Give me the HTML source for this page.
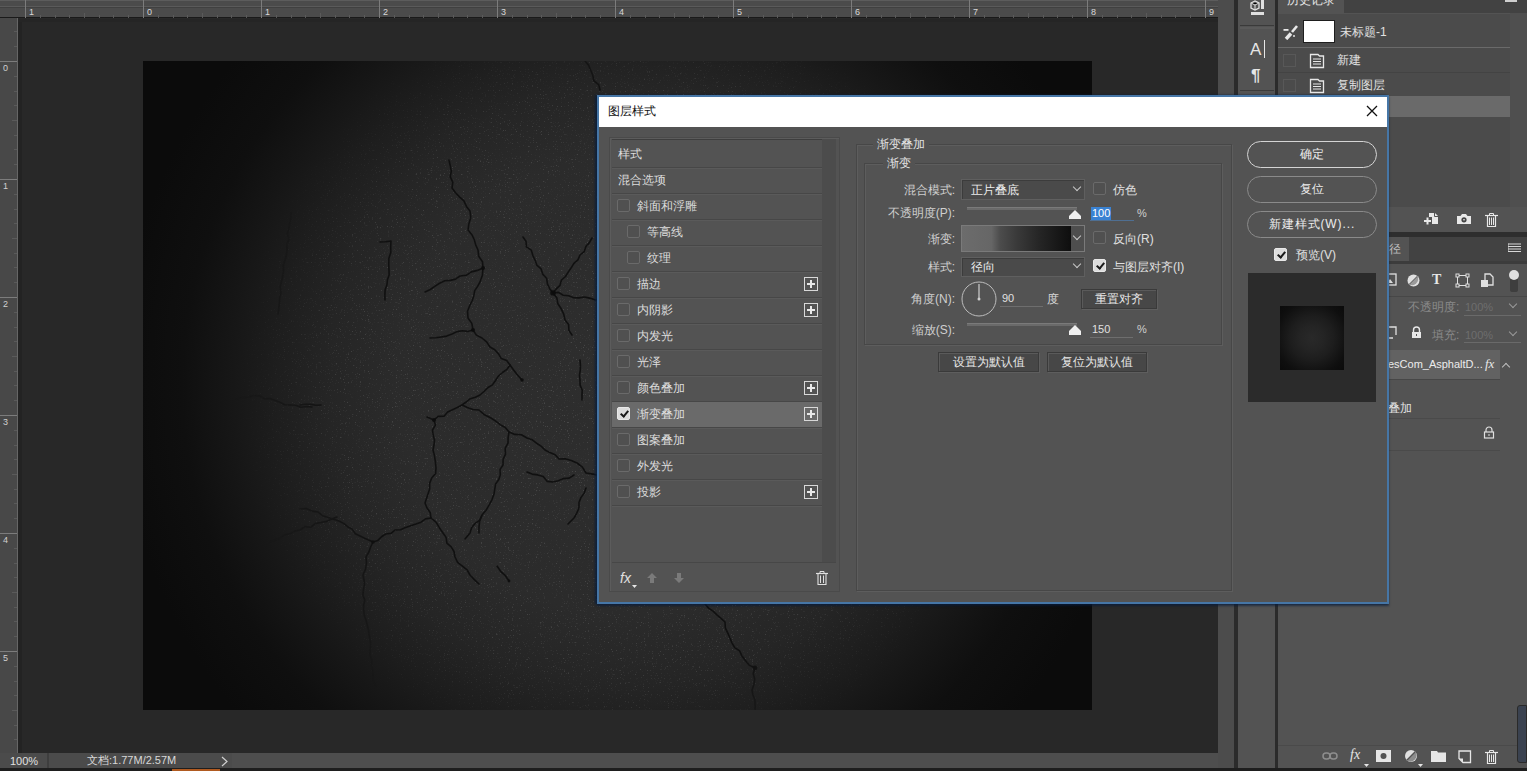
<!DOCTYPE html>
<html><head><meta charset="utf-8">
<style>
*{margin:0;padding:0;box-sizing:border-box}
html,body{width:1527px;height:771px;overflow:hidden;background:#282828;font-family:"Liberation Sans",sans-serif;font-size:12px;color:#d6d6d6}
.a{position:absolute}
.t{position:absolute;white-space:nowrap;line-height:1}

.cb{position:absolute;width:13px;height:13px;border:1px solid #6a6a6a;background:#505050;border-radius:2px}
.cbk{position:absolute;width:13px;height:13px;background:#dcdcdc;border:1px solid #e8e8e8;border-radius:2px}
.cbk:after{content:"";position:absolute;left:3.5px;top:1px;width:3px;height:6px;border:solid #1a1a1a;border-width:0 2px 2px 0;transform:rotate(40deg)}
.pl{position:absolute;width:14px;height:14px;border:1px solid #d8d8d8}
.pl:before{content:"";position:absolute;left:2px;top:5px;width:8px;height:2px;background:#e8e8e8}
.pl:after{content:"";position:absolute;left:5px;top:2px;width:2px;height:8px;background:#e8e8e8}
.row{position:absolute;left:612px;width:210px;height:26px;border-bottom:1px solid #474747;box-shadow:0 1px 0 #5a5a5a}
.rt{position:absolute;white-space:nowrap;line-height:1;font-size:12px;color:#dcdcdc}

.lb{position:absolute;white-space:nowrap;line-height:1;font-size:12px;color:#cfcfcf;text-align:right}
.dd{position:absolute;height:21px;background:#4a4a4a;border:1px solid #5f5f5f;box-shadow:inset 1px 1px 0 #3c3c3c}
.chev{position:absolute;width:6px;height:6px;border:solid #c8c8c8;border-width:0 1px 1px 0;transform:rotate(45deg)}
.btn{position:absolute;height:20px;background:#474747;border:1px solid #3a3a3a;box-shadow:inset 1px 1px 0 #5a5a5a, 1px 1px 0 #5e5e5e;color:#e6e6e6;font-size:12px;line-height:18px;text-align:center}
.pill{position:absolute;left:1247px;width:130px;height:27px;border-radius:14px;border:1px solid #8a8a8a;color:#ececec;font-size:12px;line-height:25px;text-align:center}
.thumb{position:absolute;width:14px;height:9px}
</style></head>
<body>
<!-- canvas area -->
<div class="a" style="left:0;top:0;width:1218px;height:771px;background:#282828"></div>
<!-- top ruler -->
<div class="a" id="rt" style="left:0;top:0;width:1218px;height:18px;background:#4b4b4b;border-bottom:1px solid #1a1a1a"></div>
<!-- left ruler -->
<div class="a" id="rl" style="left:0;top:18px;width:18px;height:735px;background:#484848;border-right:1px solid #666"></div><div class="a" style="left:18px;top:19px;width:4px;height:734px;background:#232323"></div><div class="a" style="left:18px;top:19px;width:1200px;height:3px;background:#252525"></div>
<!-- document -->
<div class="a" id="doc" style="left:143px;top:61px;width:949px;height:649px;background:radial-gradient(circle at 484px 324px,#2e2e2e 0,#2b2b2b 230px,#252525 300px,#1e1e1e 350px,#161616 400px,#0f0f0f 445px,#0b0b0b 510px)"></div>
<svg class="a" style="left:143px;top:61px" width="949" height="649">
<defs><filter id="nz" x="0" y="0" width="100%" height="100%"><feTurbulence type="fractalNoise" baseFrequency="0.75" numOctaves="2" seed="3"/><feColorMatrix values="0 0 0 0 1  0 0 0 0 1  0 0 0 0 1  6 0 0 0 -3.9"/></filter>
<radialGradient id="vg" cx="484" cy="324" r="480" gradientUnits="userSpaceOnUse"><stop offset="0" stop-color="#fff" stop-opacity="1"/><stop offset="0.6" stop-color="#fff" stop-opacity="0.9"/><stop offset="0.82" stop-color="#fff" stop-opacity="0"/></radialGradient>
<mask id="vm"><rect width="949" height="649" fill="url(#vg)"/></mask></defs>
<g mask="url(#vm)"><rect width="949" height="649" filter="url(#nz)" opacity="0.13"/>
<g fill="none" stroke="#0a0a0a" stroke-width="1.6" stroke-linejoin="round" stroke-linecap="round" opacity="0.85"><polyline points="306.0,99.0 307.2,104.5 308.3,110.1 307.3,115.9 309.8,121.3 309.0,127.0 312.5,131.7 316.5,135.9 320.9,139.9 323.4,145.4 327.0,150.0 327.8,156.5 325.9,162.7 325.0,169.0 328.7,173.4 331.2,178.4 332.7,183.9 335.0,189.0 335.7,195.3 339.5,200.7 340.0,207.0 339.4,214.2 337.0,221.0 334.6,225.4 331.7,229.6 330.8,234.7 329.3,239.5 327.0,244.0 324.5,250.3 325.0,257.0 328.8,262.4 330.0,269.0 333.4,274.1 339.0,277.0 343.6,280.9 347.0,286.0 351.8,288.7 355.4,292.7 358.3,297.6 363.7,299.6 367.0,304.0 370.8,309.2 374.7,314.3 379.0,319.0"/><polyline points="340.0,207.0 334.4,209.4 328.4,210.9 323.2,214.3 317.0,215.0 312.5,218.1 307.3,219.4 301.8,219.7 297.0,222.0 292.1,225.2 287.3,228.5 282.0,231.0"/><polyline points="237.0,181.0 242.5,180.8 248.0,180.0 247.7,185.8 247.8,191.6 245.9,197.3 245.8,203.2 246.0,209.0 246.1,214.1 244.4,219.0 243.9,224.0 242.1,228.8 241.9,233.9 242.0,239.0"/><polyline points="380.0,176.0 383.0,180.3 383.4,185.9 388.3,189.2 389.8,194.3 392.0,199.0 393.8,204.1 398.1,207.9 399.7,213.1 403.6,217.2 404.4,222.8 406.7,227.7 410.0,232.0 413.2,227.9 417.0,224.3 418.5,219.0 422.5,215.5 425.2,211.1 428.2,206.8 430.9,202.4 434.9,198.9 437.0,194.0 441.2,190.6 442.9,185.5 446.4,181.6 449.0,177.0"/><polyline points="410.0,232.0 415.4,231.4 420.3,234.2 425.6,234.8 430.7,236.7 436.0,236.9 441.4,236.0 446.6,237.1 451.7,238.8 457.0,239.0"/><polyline points="410.0,232.0 413.8,236.8 414.9,242.8 418.2,247.8 420.7,253.1 422.0,259.0 425.6,263.4 425.9,269.4 429.0,274.0"/><polyline points="442.0,0.0 445.6,4.3 447.7,9.3 449.8,14.3 450.9,19.9 455.7,23.6 457.0,29.0"/><polyline points="437.0,299.0 437.4,304.0 437.3,309.0 436.5,314.1 437.0,319.1 437.1,324.1 439.2,329.0 439.0,334.0 439.0,339.0"/><polyline points="330.0,269.0 324.8,270.4 319.3,269.8 314.0,270.6 309.0,273.0 303.7,275.1 298.2,276.0 292.7,276.8 287.0,277.0"/><polyline points="367.0,304.0 363.9,308.4 359.5,311.5 355.5,315.0 352.5,319.5 349.4,323.9 344.7,326.7 341.0,330.5 337.0,334.0 332.4,336.3 327.3,337.7 323.2,341.0 319.0,344.0 314.3,346.5 309.5,348.7 304.7,351.0 301.0,355.3 295.1,355.4 291.0,359.0 284.0,356.0"/><polyline points="319.0,344.0 324.4,346.5 330.0,348.5 336.0,349.0 341.5,353.8 348.0,357.0 352.7,360.2 357.2,363.7 362.3,366.5 366.0,371.0 371.9,373.4 378.4,373.7 384.0,377.0 389.3,378.8 393.5,382.2 398.1,385.1 402.0,389.0 406.9,391.6 412.1,393.8 416.0,398.0 422.3,397.8 428.2,399.6 434.0,402.0 439.4,406.1 443.0,412.0 450.1,413.1 457.0,415.0"/><polyline points="291.0,359.0 292.4,364.1 289.5,369.0 290.1,374.0 291.5,379.0 291.0,384.0 290.0,389.0 291.5,394.9 292.4,400.9 293.0,407.0 292.6,412.6 288.7,417.1 286.7,422.1 286.7,427.8 285.0,433.0 282.0,442.0 284.0,447.0 287.2,451.5 288.0,457.0 293.0,461.2 296.4,466.7 300.0,472.0 303.1,476.5 303.9,482.1 308.2,485.9 311.0,490.5 312.0,496.0 314.6,501.4 319.4,505.1 324.1,508.8 327.0,514.0 331.4,518.6 336.0,523.0"/><polyline points="157.0,448.0 163.2,447.5 169.0,450.1 175.0,451.0 179.6,454.7 185.0,456.6 190.5,458.3 196.0,460.0 200.6,462.4 204.6,465.7 209.2,468.1 212.3,472.7 217.0,475.0 223.5,478.1 230.0,481.0 234.8,479.4 238.5,475.7 242.8,473.0 248.1,472.3 252.0,469.0 257.6,468.8 262.6,466.6 267.7,464.8 272.9,463.1 278.0,461.2 282.6,457.9 288.0,457.0"/><polyline points="230.0,481.0 227.6,486.0 225.8,491.2 223.0,496.0 223.5,502.2 222.5,508.2 220.0,514.0 221.0,519.0 221.4,523.9 220.4,529.0 219.9,534.1 221.8,539.0 220.6,544.1 220.8,549.1 221.2,554.1 223.0,559.0 224.2,563.9 225.4,568.9 226.1,573.9 227.0,578.9 227.7,583.9 227.1,589.1 227.0,594.2 229.0,599.0 228.4,604.3 230.1,609.4 230.0,614.6 230.0,619.9 232.8,624.9 231.5,630.2 231.2,635.5 232.1,640.7 232.7,645.9 234.0,651.0"/><polyline points="366.0,371.0 365.1,376.5 365.0,382.2 362.1,387.3 362.5,393.1 360.1,398.3 360.0,404.0 357.1,408.4 357.3,413.8 355.8,418.6 352.6,422.9 351.8,428.0 351.0,433.0 348.9,438.8 346.0,444.1 343.0,449.3 339.0,454.0 336.7,459.8 336.0,465.8 336.0,472.0"/><polyline points="339.0,454.0 336.9,459.1 332.1,462.4 328.7,466.6 327.0,472.0 322.0,478.0"/><polyline points="354.0,505.0 357.6,510.3 362.4,514.7 366.0,520.0"/><polyline points="384.0,411.0 389.1,413.1 394.8,413.9 400.2,415.5 404.3,420.4 410.0,421.0 415.4,419.7 420.5,417.6 426.2,417.1 431.0,414.0"/><polyline points="443.0,427.0 441.2,432.1 437.9,436.6 436.0,441.6 435.9,447.3 433.7,452.3 431.0,457.0 425.0,463.0"/><polyline points="157.0,344.0 162.2,343.3 167.5,343.2 172.8,344.3 178.0,344.0"/><polyline points="93.0,338.0 98.9,336.5 105.0,336.2 110.9,334.6 117.0,335.0 121.6,337.8 127.1,337.6 132.0,339.4 136.9,341.3 141.6,343.7 147.0,344.0 152.5,344.2 157.9,346.3 163.5,345.5 169.0,346.0"/><polyline points="127.0,481.0 132.0,479.1 137.0,477.1 141.4,473.6 146.9,472.8 151.6,470.1 157.0,469.0 161.8,465.6 167.9,466.2 172.5,462.4 178.1,461.5 183.7,460.4 188.8,458.0 194.0,456.0"/><polyline points="148.0,152.0 147.9,157.3 146.6,162.4 145.8,167.6 144.4,172.8 145.9,178.3 143.8,183.3 144.1,188.7 143.4,193.9 142.0,199.0 140.4,204.3 140.6,209.8 139.7,215.2 138.4,220.5 137.2,225.8 138.0,231.4 136.7,236.8 136.4,242.2 135.7,247.6 135.0,253.0"/><polyline points="562.0,543.0 565.6,547.1 570.1,550.1 573.9,553.9 578.0,557.3 582.0,561.0 582.3,566.8 584.7,571.9 587.0,577.0 589.0,582.1 591.8,586.6 596.6,589.8 598.8,594.7 602.0,599.0 606.1,604.1 612.0,607.0 610.2,612.4 611.7,618.2 610.9,623.7 609.0,629.0 609.9,634.0 611.9,638.8 612.1,643.9 612.0,649.0"/><polyline points="187.0,0.0 187.6,5.7 185.0,11.1 184.0,16.6 182.9,22.1 184.5,28.0 182.0,33.3 182.0,39.0 180.6,43.9 181.4,49.2 178.2,53.8 177.0,58.7 178.5,64.2 175.3,68.8 176.2,74.1 175.0,79.0"/></g>
<g fill="#0b0b0b" opacity="0.9"><circle cx="340" cy="207" r="2.1"/><circle cx="410" cy="232" r="2.8"/><circle cx="330" cy="269" r="2.1"/><circle cx="291" cy="359" r="2.1"/><circle cx="230" cy="481" r="1.8"/><circle cx="612" cy="607" r="2.4"/><circle cx="379" cy="319" r="1.8"/><circle cx="366" cy="520" r="1.4"/></g></g>
</svg>
<!-- status bar -->
<div class="a" style="left:0;top:753px;width:1218px;height:15px;background:#4b4b4b"></div>
<div class="a" style="left:0;top:768px;width:1527px;height:3px;background:#1e1e1e"></div>
<!-- right strip -->
<div class="a" style="left:0;top:0;width:1218px;height:1px;background:#5c5c5c"></div>
<div class="a" style="left:0;top:6px;width:1218px;height:1px;background:#5a5a5a"></div>
<div class="a" style="left:0;top:7px;width:1218px;height:1px;background:#404040"></div>
<div class="a" style="left:25px;top:0;width:1px;height:18px;background:#7c7c7c"></div>
<div class="t" style="left:29px;top:8px;font-size:9px;color:#d8d8d8">1</div>
<div class="a" style="left:40px;top:15px;width:1px;height:3px;background:#5a5a5a"></div>
<div class="a" style="left:55px;top:15px;width:1px;height:3px;background:#5a5a5a"></div>
<div class="a" style="left:69px;top:15px;width:1px;height:3px;background:#5a5a5a"></div>
<div class="a" style="left:84px;top:13px;width:1px;height:5px;background:#5a5a5a"></div>
<div class="a" style="left:99px;top:15px;width:1px;height:3px;background:#5a5a5a"></div>
<div class="a" style="left:113px;top:15px;width:1px;height:3px;background:#5a5a5a"></div>
<div class="a" style="left:128px;top:15px;width:1px;height:3px;background:#5a5a5a"></div>
<div class="a" style="left:143px;top:0;width:1px;height:18px;background:#7c7c7c"></div>
<div class="t" style="left:147px;top:8px;font-size:9px;color:#d8d8d8">0</div>
<div class="a" style="left:158px;top:15px;width:1px;height:3px;background:#5a5a5a"></div>
<div class="a" style="left:173px;top:15px;width:1px;height:3px;background:#5a5a5a"></div>
<div class="a" style="left:187px;top:15px;width:1px;height:3px;background:#5a5a5a"></div>
<div class="a" style="left:202px;top:13px;width:1px;height:5px;background:#5a5a5a"></div>
<div class="a" style="left:217px;top:15px;width:1px;height:3px;background:#5a5a5a"></div>
<div class="a" style="left:231px;top:15px;width:1px;height:3px;background:#5a5a5a"></div>
<div class="a" style="left:246px;top:15px;width:1px;height:3px;background:#5a5a5a"></div>
<div class="a" style="left:261px;top:0;width:1px;height:18px;background:#7c7c7c"></div>
<div class="t" style="left:265px;top:8px;font-size:9px;color:#d8d8d8">1</div>
<div class="a" style="left:276px;top:15px;width:1px;height:3px;background:#5a5a5a"></div>
<div class="a" style="left:291px;top:15px;width:1px;height:3px;background:#5a5a5a"></div>
<div class="a" style="left:305px;top:15px;width:1px;height:3px;background:#5a5a5a"></div>
<div class="a" style="left:320px;top:13px;width:1px;height:5px;background:#5a5a5a"></div>
<div class="a" style="left:335px;top:15px;width:1px;height:3px;background:#5a5a5a"></div>
<div class="a" style="left:349px;top:15px;width:1px;height:3px;background:#5a5a5a"></div>
<div class="a" style="left:364px;top:15px;width:1px;height:3px;background:#5a5a5a"></div>
<div class="a" style="left:379px;top:0;width:1px;height:18px;background:#7c7c7c"></div>
<div class="t" style="left:383px;top:8px;font-size:9px;color:#d8d8d8">2</div>
<div class="a" style="left:394px;top:15px;width:1px;height:3px;background:#5a5a5a"></div>
<div class="a" style="left:409px;top:15px;width:1px;height:3px;background:#5a5a5a"></div>
<div class="a" style="left:423px;top:15px;width:1px;height:3px;background:#5a5a5a"></div>
<div class="a" style="left:438px;top:13px;width:1px;height:5px;background:#5a5a5a"></div>
<div class="a" style="left:453px;top:15px;width:1px;height:3px;background:#5a5a5a"></div>
<div class="a" style="left:467px;top:15px;width:1px;height:3px;background:#5a5a5a"></div>
<div class="a" style="left:482px;top:15px;width:1px;height:3px;background:#5a5a5a"></div>
<div class="a" style="left:497px;top:0;width:1px;height:18px;background:#7c7c7c"></div>
<div class="t" style="left:501px;top:8px;font-size:9px;color:#d8d8d8">3</div>
<div class="a" style="left:512px;top:15px;width:1px;height:3px;background:#5a5a5a"></div>
<div class="a" style="left:527px;top:15px;width:1px;height:3px;background:#5a5a5a"></div>
<div class="a" style="left:541px;top:15px;width:1px;height:3px;background:#5a5a5a"></div>
<div class="a" style="left:556px;top:13px;width:1px;height:5px;background:#5a5a5a"></div>
<div class="a" style="left:571px;top:15px;width:1px;height:3px;background:#5a5a5a"></div>
<div class="a" style="left:585px;top:15px;width:1px;height:3px;background:#5a5a5a"></div>
<div class="a" style="left:600px;top:15px;width:1px;height:3px;background:#5a5a5a"></div>
<div class="a" style="left:615px;top:0;width:1px;height:18px;background:#7c7c7c"></div>
<div class="t" style="left:619px;top:8px;font-size:9px;color:#d8d8d8">4</div>
<div class="a" style="left:630px;top:15px;width:1px;height:3px;background:#5a5a5a"></div>
<div class="a" style="left:645px;top:15px;width:1px;height:3px;background:#5a5a5a"></div>
<div class="a" style="left:659px;top:15px;width:1px;height:3px;background:#5a5a5a"></div>
<div class="a" style="left:674px;top:13px;width:1px;height:5px;background:#5a5a5a"></div>
<div class="a" style="left:689px;top:15px;width:1px;height:3px;background:#5a5a5a"></div>
<div class="a" style="left:703px;top:15px;width:1px;height:3px;background:#5a5a5a"></div>
<div class="a" style="left:718px;top:15px;width:1px;height:3px;background:#5a5a5a"></div>
<div class="a" style="left:733px;top:0;width:1px;height:18px;background:#7c7c7c"></div>
<div class="t" style="left:737px;top:8px;font-size:9px;color:#d8d8d8">5</div>
<div class="a" style="left:748px;top:15px;width:1px;height:3px;background:#5a5a5a"></div>
<div class="a" style="left:763px;top:15px;width:1px;height:3px;background:#5a5a5a"></div>
<div class="a" style="left:777px;top:15px;width:1px;height:3px;background:#5a5a5a"></div>
<div class="a" style="left:792px;top:13px;width:1px;height:5px;background:#5a5a5a"></div>
<div class="a" style="left:807px;top:15px;width:1px;height:3px;background:#5a5a5a"></div>
<div class="a" style="left:821px;top:15px;width:1px;height:3px;background:#5a5a5a"></div>
<div class="a" style="left:836px;top:15px;width:1px;height:3px;background:#5a5a5a"></div>
<div class="a" style="left:851px;top:0;width:1px;height:18px;background:#7c7c7c"></div>
<div class="t" style="left:855px;top:8px;font-size:9px;color:#d8d8d8">6</div>
<div class="a" style="left:866px;top:15px;width:1px;height:3px;background:#5a5a5a"></div>
<div class="a" style="left:881px;top:15px;width:1px;height:3px;background:#5a5a5a"></div>
<div class="a" style="left:895px;top:15px;width:1px;height:3px;background:#5a5a5a"></div>
<div class="a" style="left:910px;top:13px;width:1px;height:5px;background:#5a5a5a"></div>
<div class="a" style="left:925px;top:15px;width:1px;height:3px;background:#5a5a5a"></div>
<div class="a" style="left:939px;top:15px;width:1px;height:3px;background:#5a5a5a"></div>
<div class="a" style="left:954px;top:15px;width:1px;height:3px;background:#5a5a5a"></div>
<div class="a" style="left:969px;top:0;width:1px;height:18px;background:#7c7c7c"></div>
<div class="t" style="left:973px;top:8px;font-size:9px;color:#d8d8d8">7</div>
<div class="a" style="left:984px;top:15px;width:1px;height:3px;background:#5a5a5a"></div>
<div class="a" style="left:999px;top:15px;width:1px;height:3px;background:#5a5a5a"></div>
<div class="a" style="left:1013px;top:15px;width:1px;height:3px;background:#5a5a5a"></div>
<div class="a" style="left:1028px;top:13px;width:1px;height:5px;background:#5a5a5a"></div>
<div class="a" style="left:1043px;top:15px;width:1px;height:3px;background:#5a5a5a"></div>
<div class="a" style="left:1057px;top:15px;width:1px;height:3px;background:#5a5a5a"></div>
<div class="a" style="left:1072px;top:15px;width:1px;height:3px;background:#5a5a5a"></div>
<div class="a" style="left:1087px;top:0;width:1px;height:18px;background:#7c7c7c"></div>
<div class="t" style="left:1091px;top:8px;font-size:9px;color:#d8d8d8">8</div>
<div class="a" style="left:1102px;top:15px;width:1px;height:3px;background:#5a5a5a"></div>
<div class="a" style="left:1117px;top:15px;width:1px;height:3px;background:#5a5a5a"></div>
<div class="a" style="left:1131px;top:15px;width:1px;height:3px;background:#5a5a5a"></div>
<div class="a" style="left:1146px;top:13px;width:1px;height:5px;background:#5a5a5a"></div>
<div class="a" style="left:1161px;top:15px;width:1px;height:3px;background:#5a5a5a"></div>
<div class="a" style="left:1175px;top:15px;width:1px;height:3px;background:#5a5a5a"></div>
<div class="a" style="left:1190px;top:15px;width:1px;height:3px;background:#5a5a5a"></div>
<div class="a" style="left:1205px;top:0;width:1px;height:18px;background:#7c7c7c"></div>
<div class="t" style="left:1209px;top:8px;font-size:9px;color:#d8d8d8">9</div>
<div class="a" style="left:0;top:61px;width:17px;height:1px;background:#7c7c7c"></div>
<div class="t" style="left:3px;top:64px;font-size:9px;color:#d0d0d0">0</div>
<div class="a" style="left:14px;top:76px;width:3px;height:1px;background:#5a5a5a"></div>
<div class="a" style="left:14px;top:91px;width:3px;height:1px;background:#5a5a5a"></div>
<div class="a" style="left:14px;top:105px;width:3px;height:1px;background:#5a5a5a"></div>
<div class="a" style="left:12px;top:120px;width:5px;height:1px;background:#5a5a5a"></div>
<div class="a" style="left:14px;top:135px;width:3px;height:1px;background:#5a5a5a"></div>
<div class="a" style="left:14px;top:149px;width:3px;height:1px;background:#5a5a5a"></div>
<div class="a" style="left:14px;top:164px;width:3px;height:1px;background:#5a5a5a"></div>
<div class="a" style="left:0;top:179px;width:17px;height:1px;background:#7c7c7c"></div>
<div class="t" style="left:3px;top:182px;font-size:9px;color:#d0d0d0">1</div>
<div class="a" style="left:14px;top:194px;width:3px;height:1px;background:#5a5a5a"></div>
<div class="a" style="left:14px;top:209px;width:3px;height:1px;background:#5a5a5a"></div>
<div class="a" style="left:14px;top:223px;width:3px;height:1px;background:#5a5a5a"></div>
<div class="a" style="left:12px;top:238px;width:5px;height:1px;background:#5a5a5a"></div>
<div class="a" style="left:14px;top:253px;width:3px;height:1px;background:#5a5a5a"></div>
<div class="a" style="left:14px;top:267px;width:3px;height:1px;background:#5a5a5a"></div>
<div class="a" style="left:14px;top:282px;width:3px;height:1px;background:#5a5a5a"></div>
<div class="a" style="left:0;top:297px;width:17px;height:1px;background:#7c7c7c"></div>
<div class="t" style="left:3px;top:300px;font-size:9px;color:#d0d0d0">2</div>
<div class="a" style="left:14px;top:312px;width:3px;height:1px;background:#5a5a5a"></div>
<div class="a" style="left:14px;top:327px;width:3px;height:1px;background:#5a5a5a"></div>
<div class="a" style="left:14px;top:341px;width:3px;height:1px;background:#5a5a5a"></div>
<div class="a" style="left:12px;top:356px;width:5px;height:1px;background:#5a5a5a"></div>
<div class="a" style="left:14px;top:371px;width:3px;height:1px;background:#5a5a5a"></div>
<div class="a" style="left:14px;top:385px;width:3px;height:1px;background:#5a5a5a"></div>
<div class="a" style="left:14px;top:400px;width:3px;height:1px;background:#5a5a5a"></div>
<div class="a" style="left:0;top:415px;width:17px;height:1px;background:#7c7c7c"></div>
<div class="t" style="left:3px;top:418px;font-size:9px;color:#d0d0d0">3</div>
<div class="a" style="left:14px;top:430px;width:3px;height:1px;background:#5a5a5a"></div>
<div class="a" style="left:14px;top:445px;width:3px;height:1px;background:#5a5a5a"></div>
<div class="a" style="left:14px;top:459px;width:3px;height:1px;background:#5a5a5a"></div>
<div class="a" style="left:12px;top:474px;width:5px;height:1px;background:#5a5a5a"></div>
<div class="a" style="left:14px;top:489px;width:3px;height:1px;background:#5a5a5a"></div>
<div class="a" style="left:14px;top:503px;width:3px;height:1px;background:#5a5a5a"></div>
<div class="a" style="left:14px;top:518px;width:3px;height:1px;background:#5a5a5a"></div>
<div class="a" style="left:0;top:533px;width:17px;height:1px;background:#7c7c7c"></div>
<div class="t" style="left:3px;top:536px;font-size:9px;color:#d0d0d0">4</div>
<div class="a" style="left:14px;top:548px;width:3px;height:1px;background:#5a5a5a"></div>
<div class="a" style="left:14px;top:563px;width:3px;height:1px;background:#5a5a5a"></div>
<div class="a" style="left:14px;top:577px;width:3px;height:1px;background:#5a5a5a"></div>
<div class="a" style="left:12px;top:592px;width:5px;height:1px;background:#5a5a5a"></div>
<div class="a" style="left:14px;top:607px;width:3px;height:1px;background:#5a5a5a"></div>
<div class="a" style="left:14px;top:621px;width:3px;height:1px;background:#5a5a5a"></div>
<div class="a" style="left:14px;top:636px;width:3px;height:1px;background:#5a5a5a"></div>
<div class="a" style="left:0;top:651px;width:17px;height:1px;background:#7c7c7c"></div>
<div class="t" style="left:3px;top:654px;font-size:9px;color:#d0d0d0">5</div>
<div class="a" style="left:14px;top:666px;width:3px;height:1px;background:#5a5a5a"></div>
<div class="a" style="left:14px;top:681px;width:3px;height:1px;background:#5a5a5a"></div>
<div class="a" style="left:14px;top:695px;width:3px;height:1px;background:#5a5a5a"></div>
<div class="a" style="left:12px;top:710px;width:5px;height:1px;background:#5a5a5a"></div>
<div class="a" style="left:14px;top:725px;width:3px;height:1px;background:#5a5a5a"></div>
<div class="a" style="left:14px;top:739px;width:3px;height:1px;background:#5a5a5a"></div>
<div class="a" style="left:14px;top:46px;width:3px;height:1px;background:#5a5a5a"></div>
<div class="a" style="left:14px;top:31px;width:3px;height:1px;background:#5a5a5a"></div>
<div class="a" style="left:47px;top:753px;width:2px;height:15px;background:#3e3e3e"></div>
<div class="a" style="left:232px;top:753px;width:986px;height:15px;background:#4e4e4e"></div>
<div class="t" style="left:10px;top:756px;font-size:11px;color:#e0e0e0">100%</div>
<div class="t" style="left:87px;top:755px;font-size:11px;color:#d8d8d8">文档:1.77M/2.57M</div>
<svg class="a" style="left:221px;top:756px" width="8" height="11"><path d="M1 1L6 5.5L1 10" fill="none" stroke="#d0d0d0" stroke-width="1.2"/></svg>
<div class="a" style="left:172px;top:769px;width:48px;height:2px;background:#b05a20"></div>
<div class="a" style="left:1218px;top:0;width:16px;height:768px;background:#4c4c4c"></div>
<div class="a" style="left:1234px;top:0;width:4px;height:768px;background:#2b2b2b"></div>
<div class="a" style="left:1238px;top:0;width:37px;height:768px;background:#535353"></div>
<div class="a" style="left:1275px;top:0;width:3px;height:768px;background:#2b2b2b"></div>
<div class="a" style="left:1278px;top:0;width:249px;height:768px;background:#535353"></div>
<div class="a" style="left:1240px;top:25px;width:34px;height:1px;background:#3a3a3a"></div>
<div class="a" style="left:1240px;top:27px;width:34px;height:2px;background:#5a5a5a"></div>
<div class="a" style="left:1240px;top:90px;width:34px;height:1px;background:#3a3a3a"></div>
<svg class="a" style="left:1249px;top:0px" width="18" height="17"><path d="M2 3L6 1L10 3V8L6 10L2 8Z" fill="none" stroke="#e0e0e0" stroke-width="1.3"/><path d="M2 3L6 5L10 3M6 5V10" stroke="#e0e0e0" stroke-width="1"/><rect x="12" y="0" width="3" height="9" fill="#e0e0e0"/><rect x="2" y="12" width="13" height="3" fill="#e0e0e0"/></svg>
<div class="t" style="left:1250px;top:41px;font-size:17px;color:#e6e6e6">A</div>
<div class="a" style="left:1264px;top:40px;width:1px;height:18px;background:#e6e6e6"></div>
<div class="t" style="left:1251px;top:67px;font-size:17px;font-weight:bold;color:#e6e6e6">¶</div>
<div class="a" style="left:1278px;top:0;width:249px;height:13px;background:#424242"></div>
<div class="a" style="left:1278px;top:0;width:66px;height:13px;background:#535353"></div>
<div class="t" style="left:1287px;top:-6px;font-size:12px;color:#e6e6e6">历史记录</div>
<div class="a" style="left:1505px;top:0px;width:12px;height:2px;background:#cfcfcf"></div>
<div class="a" style="left:1278px;top:14px;width:232px;height:193px;background:#4b4b4b"></div>
<div class="a" style="left:1510px;top:13px;width:17px;height:194px;background:#4f4f4f"></div>
<div class="a" style="left:1278px;top:47px;width:232px;height:1px;background:#6a6a6a"></div>
<svg class="a" style="left:1282px;top:24px" width="16" height="16"><path d="M15 2L10 8" stroke="#e8e8e8" stroke-width="2.6"/><path d="M9 9.5L4 15" stroke="#e8e8e8" stroke-width="3.4"/><rect x="1.5" y="5" width="5" height="1.8" fill="#e8e8e8"/><rect x="11" y="11" width="2" height="2" fill="#bdbdbd"/></svg>
<div class="a" style="left:1303px;top:20px;width:32px;height:23px;background:#ffffff;border:1px solid #1e1e1e"></div>
<div class="t" style="left:1340px;top:26px;font-size:12px;color:#e0e0e0">未标题-1</div>
<div class="a" style="left:1278px;top:72px;width:232px;height:1px;background:#434343"></div>
<div class="a" style="left:1283px;top:54px;width:13px;height:13px;border:1px solid #585858"></div>
<svg class="a" style="left:1309px;top:53px" width="16" height="16"><path d="M1.5 1.5H9L10.5 3H14.5V14.5H1.5Z" fill="none" stroke="#e8e8e8" stroke-width="1.3"/><path d="M4 6H12M4 8.5H12M4 11H12" stroke="#e8e8e8" stroke-width="1.2"/></svg>
<div class="t" style="left:1337px;top:54px;font-size:12px;color:#e0e0e0">新建</div>
<div class="a" style="left:1278px;top:97px;width:232px;height:1px;background:#434343"></div>
<div class="a" style="left:1283px;top:79px;width:13px;height:13px;border:1px solid #585858"></div>
<svg class="a" style="left:1309px;top:78px" width="16" height="16"><path d="M1.5 1.5H9L10.5 3H14.5V14.5H1.5Z" fill="none" stroke="#e8e8e8" stroke-width="1.3"/><path d="M4 6H12M4 8.5H12M4 11H12" stroke="#e8e8e8" stroke-width="1.2"/></svg>
<div class="t" style="left:1337px;top:79px;font-size:12px;color:#e0e0e0">复制图层</div>
<div class="a" style="left:1278px;top:96px;width:232px;height:21px;background:#6a6a6a"></div>
<div class="a" style="left:1278px;top:207px;width:249px;height:25px;background:#535353"></div>
<svg class="a" style="left:1423px;top:213px" width="16" height="12"><path d="M6 0H12L15 3V11H6Z" fill="#e8e8e8"/><path d="M11.5 0V3.5H15" fill="none" stroke="#535353" stroke-width="1"/><rect x="0" y="4" width="9" height="8" fill="#535353"/><path d="M1 8H8M4.5 4.5V11.5" stroke="#e8e8e8" stroke-width="2"/></svg>
<svg class="a" style="left:1457px;top:213px" width="14" height="11"><path d="M0 3H3.5L5 1H9L10.5 3H14V11H0Z" fill="#e8e8e8"/><circle cx="7" cy="6.8" r="2.6" fill="#444"/><rect x="6" y="6.3" width="2" height="1" fill="#e8e8e8"/></svg>
<svg class="a" style="left:1485px;top:213px" width="13" height="14"><path d="M0 2.5H13" stroke="#e8e8e8" stroke-width="1.2"/><path d="M4.5 2.5V0.5H8.5V2.5" stroke="#e8e8e8" stroke-width="1" fill="none"/><path d="M2.5 3V13.5H10.5V3" stroke="#e8e8e8" stroke-width="1.2" fill="none"/><path d="M4.5 4.5V12M6.5 4.5V12M8.5 4.5V12" stroke="#e8e8e8" stroke-width="1"/></svg>
<div class="a" style="left:1278px;top:232px;width:249px;height:5px;background:#2e2e2e"></div>
<div class="a" style="left:1278px;top:237px;width:249px;height:24px;background:#424242"></div>
<div class="a" style="left:1278px;top:237px;width:131px;height:24px;background:#535353"></div>
<div class="t" style="left:1377px;top:243px;font-size:12px;color:#bdbdbd">路径</div>
<svg class="a" style="left:1508px;top:243px" width="13" height="11"><path d="M0 1H13M0 3.5H13M0 6H13M0 8.5H13" stroke="#d8d8d8" stroke-width="1"/><path d="M0 0.5V9" stroke="#d8d8d8" stroke-width="1"/></svg>
<div class="a" style="left:1278px;top:261px;width:249px;height:3px;background:#3c3c3c"></div>
<svg class="a" style="left:1384px;top:273px" width="14" height="14"><rect x="1" y="1" width="11" height="11" fill="none" stroke="#e0e0e0" stroke-width="1.3"/><path d="M3 10L6 6L9 10Z" fill="#e0e0e0"/></svg>
<svg class="a" style="left:1406px;top:273px" width="15" height="15"><circle cx="7.5" cy="7.5" r="6" fill="#e0e0e0"/><path d="M3.5 11.5L11.5 3.5" stroke="#535353" stroke-width="1.5"/><path d="M11.5 3.5A6 6 0 0 1 3.5 11.5Z" fill="#9a9a9a"/></svg>
<div class="t" style="left:1432px;top:273px;font-size:14px;font-weight:bold;font-family:'Liberation Serif',serif;color:#e6e6e6">T</div>
<svg class="a" style="left:1455px;top:273px" width="15" height="15"><rect x="2.5" y="2.5" width="10" height="10" fill="none" stroke="#e0e0e0" stroke-width="1"/><rect x="1" y="1" width="3" height="3" fill="#535353" stroke="#e0e0e0"/><rect x="11" y="1" width="3" height="3" fill="#535353" stroke="#e0e0e0"/><rect x="1" y="11" width="3" height="3" fill="#535353" stroke="#e0e0e0"/><rect x="11" y="11" width="3" height="3" fill="#535353" stroke="#e0e0e0"/></svg>
<svg class="a" style="left:1480px;top:273px" width="14" height="15"><path d="M5 1H10L13 4V12H5Z" fill="none" stroke="#e0e0e0" stroke-width="1.3"/><rect x="1" y="7" width="7" height="7" fill="#e0e0e0"/></svg>
<div class="a" style="left:1510px;top:278px;width:8px;height:14px;background:#3e3e3e;border-radius:2px"></div>
<div class="a" style="left:1509px;top:270px;width:10px;height:10px;background:#e0e0e0;border-radius:5px"></div>
<div class="a" style="left:1278px;top:296px;width:249px;height:1px;background:#474747"></div>
<div class="t" style="left:1408px;top:301px;font-size:12px;color:#8a8a8a">不透明度:</div>
<div class="t" style="left:1465px;top:302px;font-size:11px;color:#6e6e6e">100%</div>
<div class="a" style="left:1464px;top:315px;width:57px;height:1px;background:#6a6a6a"></div>
<div class="chev" style="left:1510px;top:301px;border-color:#9a9a9a"></div>
<svg class="a" style="left:1384px;top:326px" width="14" height="14"><path d="M1 4V12H9M4 1H12V9" fill="none" stroke="#e0e0e0" stroke-width="1.3"/></svg>
<svg class="a" style="left:1411px;top:326px" width="11" height="13"><path d="M2.5 6V4A3 3 0 0 1 8.5 4V6" fill="none" stroke="#e8e8e8" stroke-width="1.4"/><rect x="1" y="6" width="9" height="6" fill="#e8e8e8"/><rect x="5" y="8" width="1" height="2" fill="#535353"/></svg>
<div class="t" style="left:1432px;top:329px;font-size:12px;color:#8a8a8a">填充:</div>
<div class="t" style="left:1465px;top:330px;font-size:11px;color:#6e6e6e">100%</div>
<div class="a" style="left:1464px;top:342px;width:57px;height:1px;background:#6a6a6a"></div>
<div class="chev" style="left:1510px;top:329px;border-color:#9a9a9a"></div>
<div class="a" style="left:1278px;top:350px;width:222px;height:29px;background:#626262"></div>
<div class="t" style="left:1358px;top:359px;font-size:11px;color:#ececec">TexturesCom_AsphaltD...</div>
<div class="t" style="left:1485px;top:357px;font-size:13px;font-style:italic;font-family:'Liberation Serif',serif;color:#e8e8e8">fx</div>
<div class="chev" style="left:1503px;top:364px;transform:rotate(225deg);border-color:#bdbdbd"></div>
<div class="a" style="left:1278px;top:379px;width:222px;height:1px;background:#474747"></div>
<div class="t" style="left:1364px;top:402px;font-size:12px;color:#e0e0e0">渐变叠加</div>
<div class="a" style="left:1278px;top:418px;width:222px;height:1px;background:#4a4a4a"></div>
<svg class="a" style="left:1483px;top:426px" width="12" height="13"><path d="M3 6V4A3 3 0 0 1 9 4V6" fill="none" stroke="#e0e0e0" stroke-width="1.2"/><rect x="1.5" y="6" width="9" height="6" fill="none" stroke="#e0e0e0" stroke-width="1.2"/><rect x="5.5" y="8" width="1" height="2" fill="#e0e0e0"/></svg>
<div class="a" style="left:1278px;top:450px;width:222px;height:1px;background:#4a4a4a"></div>
<div class="a" style="left:1278px;top:745px;width:249px;height:1px;background:#4a4a4a"></div>
<svg class="a" style="left:1322px;top:751px" width="16" height="10"><rect x="1" y="2" width="7" height="6" rx="3" fill="none" stroke="#8e8e8e" stroke-width="1.5"/><rect x="8" y="2" width="7" height="6" rx="3" fill="none" stroke="#8e8e8e" stroke-width="1.5"/></svg>
<div class="t" style="left:1350px;top:748px;font-size:14px;font-style:italic;font-family:'Liberation Serif',serif;color:#e6e6e6">fx</div>
<svg class="a" style="left:1364px;top:764px" width="5" height="3"><path d="M0 0H5L2.5 3Z" fill="#e6e6e6"/></svg>
<svg class="a" style="left:1376px;top:750px" width="15" height="12"><rect x="0" y="0" width="15" height="12" fill="#e6e6e6"/><circle cx="7.5" cy="6" r="3" fill="#535353"/></svg>
<svg class="a" style="left:1404px;top:749px" width="15" height="15"><circle cx="7" cy="7" r="6" fill="#e0e0e0"/><path d="M11.2 2.8A6 6 0 0 1 2.8 11.2Z" fill="#8c8c8c"/><path d="M2.8 11.2L11.2 2.8" stroke="#535353" stroke-width="1.3"/></svg>
<svg class="a" style="left:1418px;top:764px" width="5" height="3"><path d="M0 0H5L2.5 3Z" fill="#e6e6e6"/></svg>
<svg class="a" style="left:1431px;top:750px" width="15" height="12"><path d="M0 1H6L7 2.5H15V12H0Z" fill="#e6e6e6"/></svg>
<svg class="a" style="left:1458px;top:750px" width="14" height="14"><path d="M1 1H12.5V12.5H5L1 8.5Z" fill="none" stroke="#e6e6e6" stroke-width="1.3"/><path d="M1 8.5H5V12.5Z" fill="#e6e6e6"/></svg>
<svg class="a" style="left:1485px;top:750px" width="13" height="14"><path d="M0 2.5H13" stroke="#e8e8e8" stroke-width="1.2"/><path d="M4.5 2.5V0.5H8.5V2.5" stroke="#e8e8e8" stroke-width="1" fill="none"/><path d="M2.5 3V13.5H10.5V3" stroke="#e8e8e8" stroke-width="1.2" fill="none"/><path d="M4.5 4.5V12M6.5 4.5V12M8.5 4.5V12" stroke="#e8e8e8" stroke-width="1"/></svg>
<div class="a" style="left:1517px;top:705px;width:10px;height:58px;background:#3a4250;border:1px solid #2a2a2a;border-radius:3px 0 0 3px"></div>
<div class="a" style="left:597px;top:95px;width:792px;height:509px;border:2px solid #4676a6;box-shadow:-2px 0 2px rgba(10,30,60,.8),0 2px 2px rgba(10,30,60,.6);background:#535353"></div>
<div class="a" style="left:599px;top:97px;width:788px;height:30px;background:#ffffff"></div>
<div class="t" style="left:608px;top:105px;font-size:12px;color:#111">图层样式</div>
<svg class="a" style="left:1366px;top:105px" width="12" height="12"><path d="M1 1L11 11M11 1L1 11" stroke="#111" stroke-width="1.3"/></svg>
<div class="a" style="left:609px;top:137px;width:231px;height:455px;border:1px solid #4a4a4a;box-shadow:inset 1px 1px 0 #5c5c5c"></div>
<div class="a" style="left:612px;top:139px;width:210px;height:1px;background:#3e3e3e"></div>
<div class="a" style="left:822px;top:139px;width:14px;height:424px;background:#4c4c4c"></div>
<div class="a" style="left:612px;top:562px;width:224px;height:1px;background:#474747"></div>
<div class="row" style="top:142px;"></div>
<div class="rt" style="left:618px;top:148px">样式</div>
<div class="row" style="top:168px;"></div>
<div class="rt" style="left:618px;top:174px">混合选项</div>
<div class="row" style="top:194px;"></div>
<div class="cb" style="left:617px;top:199px"></div>
<div class="rt" style="left:637px;top:200px">斜面和浮雕</div>
<div class="row" style="top:220px;"></div>
<div class="cb" style="left:627px;top:225px"></div>
<div class="rt" style="left:647px;top:226px">等高线</div>
<div class="row" style="top:246px;"></div>
<div class="cb" style="left:627px;top:251px"></div>
<div class="rt" style="left:647px;top:252px">纹理</div>
<div class="row" style="top:272px;"></div>
<div class="cb" style="left:617px;top:277px"></div>
<div class="rt" style="left:637px;top:278px">描边</div>
<div class="pl" style="left:804px;top:277px"></div>
<div class="row" style="top:298px;"></div>
<div class="cb" style="left:617px;top:303px"></div>
<div class="rt" style="left:637px;top:304px">内阴影</div>
<div class="pl" style="left:804px;top:303px"></div>
<div class="row" style="top:324px;"></div>
<div class="cb" style="left:617px;top:329px"></div>
<div class="rt" style="left:637px;top:330px">内发光</div>
<div class="row" style="top:350px;"></div>
<div class="cb" style="left:617px;top:355px"></div>
<div class="rt" style="left:637px;top:356px">光泽</div>
<div class="row" style="top:376px;"></div>
<div class="cb" style="left:617px;top:381px"></div>
<div class="rt" style="left:637px;top:382px">颜色叠加</div>
<div class="pl" style="left:804px;top:381px"></div>
<div class="row" style="top:402px;background:#6a6a6a;"></div>
<div class="cbk" style="left:617px;top:407px"></div>
<div class="rt" style="left:637px;top:408px">渐变叠加</div>
<div class="pl" style="left:804px;top:407px"></div>
<div class="row" style="top:428px;"></div>
<div class="cb" style="left:617px;top:433px"></div>
<div class="rt" style="left:637px;top:434px">图案叠加</div>
<div class="row" style="top:454px;"></div>
<div class="cb" style="left:617px;top:459px"></div>
<div class="rt" style="left:637px;top:460px">外发光</div>
<div class="row" style="top:480px;"></div>
<div class="cb" style="left:617px;top:485px"></div>
<div class="rt" style="left:637px;top:486px">投影</div>
<div class="pl" style="left:804px;top:485px"></div>
<div class="a" style="left:856px;top:144px;width:376px;height:447px;border:1px solid #474747;box-shadow:inset 1px 1px 0 #5d5d5d,1px 1px 0 #5d5d5d"></div>
<div class="a" style="left:873px;top:136px;width:56px;height:16px;background:#535353"></div>
<div class="t" style="left:877px;top:138px;font-size:12px;color:#e2e2e2">渐变叠加</div>
<div class="a" style="left:864px;top:163px;width:358px;height:182px;border:1px solid #474747;box-shadow:inset 1px 1px 0 #5d5d5d,1px 1px 0 #5d5d5d"></div>
<div class="a" style="left:883px;top:155px;width:32px;height:16px;background:#535353"></div>
<div class="t" style="left:887px;top:157px;font-size:12px;color:#e2e2e2">渐变</div>
<div class="lb" style="left:855px;width:100px;top:184px">混合模式:</div>
<div class="lb" style="left:855px;width:100px;top:207px">不透明度(P):</div>
<div class="lb" style="left:855px;width:100px;top:233px">渐变:</div>
<div class="lb" style="left:855px;width:100px;top:261px">样式:</div>
<div class="lb" style="left:855px;width:100px;top:293px">角度(N):</div>
<div class="lb" style="left:855px;width:100px;top:324px">缩放(S):</div>
<div class="dd" style="left:961px;top:179px;width:124px"></div>
<div class="t" style="left:971px;top:184px;font-size:12px;color:#ececec">正片叠底</div>
<div class="chev" style="left:1074px;top:184px"></div>
<div class="a" style="left:967px;top:207px;width:110px;height:3px;background:#6a6a6a;border-top:1px solid #7a7a7a"></div>
<svg class="a" style="left:1068px;top:209px" width="14" height="11"><path d="M7 1L13 7V10H1V7Z" fill="#f0f0f0"/></svg>
<div class="a" style="left:1090px;top:220px;width:44px;height:1px;background:#4f6f92"></div>
<div class="a" style="left:1091px;top:207px;width:20px;height:13px;background:#3a82d2"></div>
<div class="t" style="left:1092px;top:208px;font-size:11px;color:#ffffff">100</div>
<div class="t" style="left:1137px;top:208px;font-size:11px;color:#d0d0d0">%</div>
<div class="cb" style="left:1093px;top:182px"></div>
<div class="t" style="left:1113px;top:184px;font-size:12px;color:#e0e0e0">仿色</div>
<div class="a" style="left:961px;top:225px;width:124px;height:27px;background:#4e4e4e;border:1px solid #7a7a7a"></div>
<div class="a" style="left:962px;top:226px;width:109px;height:25px;background:linear-gradient(90deg,#6c6c6c 0%,#666666 27%,#4c4c4c 35%,#3a3a3a 50%,#262626 70%,#161616 90%,#0e0e0e 100%)"></div>
<div class="chev" style="left:1074px;top:233px"></div>
<div class="cb" style="left:1093px;top:231px"></div>
<div class="t" style="left:1113px;top:233px;font-size:12px;color:#e0e0e0">反向(R)</div>
<div class="dd" style="left:961px;top:257px;width:124px;height:20px"></div>
<div class="t" style="left:971px;top:261px;font-size:12px;color:#ececec">径向</div>
<div class="chev" style="left:1074px;top:261px"></div>
<div class="cbk" style="left:1093px;top:259px"></div>
<div class="t" style="left:1113px;top:261px;font-size:12px;color:#e0e0e0">与图层对齐(I)</div>
<svg class="a" style="left:960px;top:280px" width="38" height="38"><circle cx="19" cy="19" r="17" fill="none" stroke="#bdbdbd" stroke-width="1"/><path d="M19 4V19" stroke="#d0d0d0" stroke-width="1.2"/><circle cx="19" cy="19" r="1.5" fill="#d0d0d0"/></svg>
<div class="t" style="left:1002px;top:293px;font-size:11px;color:#e0e0e0">90</div>
<div class="a" style="left:1000px;top:306px;width:43px;height:1px;background:#6e6e6e"></div>
<div class="t" style="left:1047px;top:293px;font-size:12px;color:#d8d8d8">度</div>
<div class="btn" style="left:1081px;top:289px;width:76px">重置对齐</div>
<div class="a" style="left:967px;top:323px;width:110px;height:3px;background:#6a6a6a;border-top:1px solid #7a7a7a"></div>
<svg class="a" style="left:1068px;top:324px" width="14" height="12"><path d="M7 1L13 7V11H1V7Z" fill="#f0f0f0"/></svg>
<div class="t" style="left:1092px;top:324px;font-size:11px;color:#e0e0e0">150</div>
<div class="a" style="left:1090px;top:337px;width:43px;height:1px;background:#6e6e6e"></div>
<div class="t" style="left:1137px;top:324px;font-size:11px;color:#d0d0d0">%</div>
<div class="btn" style="left:938px;top:352px;width:101px">设置为默认值</div>
<div class="btn" style="left:1047px;top:352px;width:100px">复位为默认值</div>
<div class="pill" style="top:141px;border-color:#d4d4d4">确定</div>
<div class="pill" style="top:176px">复位</div>
<div class="pill" style="top:211px;letter-spacing:0.9px">新建样式(W)...</div>
<div class="cbk" style="left:1274px;top:248px"></div>
<div class="t" style="left:1296px;top:249px;font-size:12px;color:#e0e0e0">预览(V)</div>
<div class="a" style="left:1248px;top:273px;width:128px;height:129px;background:#2b2b2b"></div>
<div class="a" style="left:1280px;top:306px;width:64px;height:64px;background:radial-gradient(circle at 50% 50%,#292929 0,#242424 12px,#1d1d1d 22px,#161616 29px,#0f0f0f 36px,#0b0b0b 44px)"></div>
<div class="t" style="left:620px;top:571px;font-size:14px;font-style:italic;font-family:'Liberation Sans',sans-serif;color:#e0e0e0">fx</div>
<svg class="a" style="left:632px;top:585px" width="5" height="3"><path d="M0 0H5L2.5 3Z" fill="#e6e6e6"/></svg>
<svg class="a" style="left:646px;top:572px" width="12" height="12"><path d="M6 1L11 6H8V11H4V6H1Z" fill="#7a7a7a"/></svg>
<svg class="a" style="left:673px;top:572px" width="12" height="12"><path d="M6 11L11 6H8V1H4V6H1Z" fill="#7a7a7a"/></svg>
<svg class="a" style="left:816px;top:571px" width="12" height="14"><path d="M0 2.5H12" stroke="#e0e0e0" stroke-width="1.2"/><path d="M4 2.5V0.5H8V2.5" stroke="#e0e0e0" stroke-width="1" fill="none"/><path d="M2 3V13.5H10V3" stroke="#e0e0e0" stroke-width="1.1" fill="none"/><path d="M4.5 4.5V12M7.5 4.5V12" stroke="#e0e0e0" stroke-width="1"/></svg>
</body></html>
